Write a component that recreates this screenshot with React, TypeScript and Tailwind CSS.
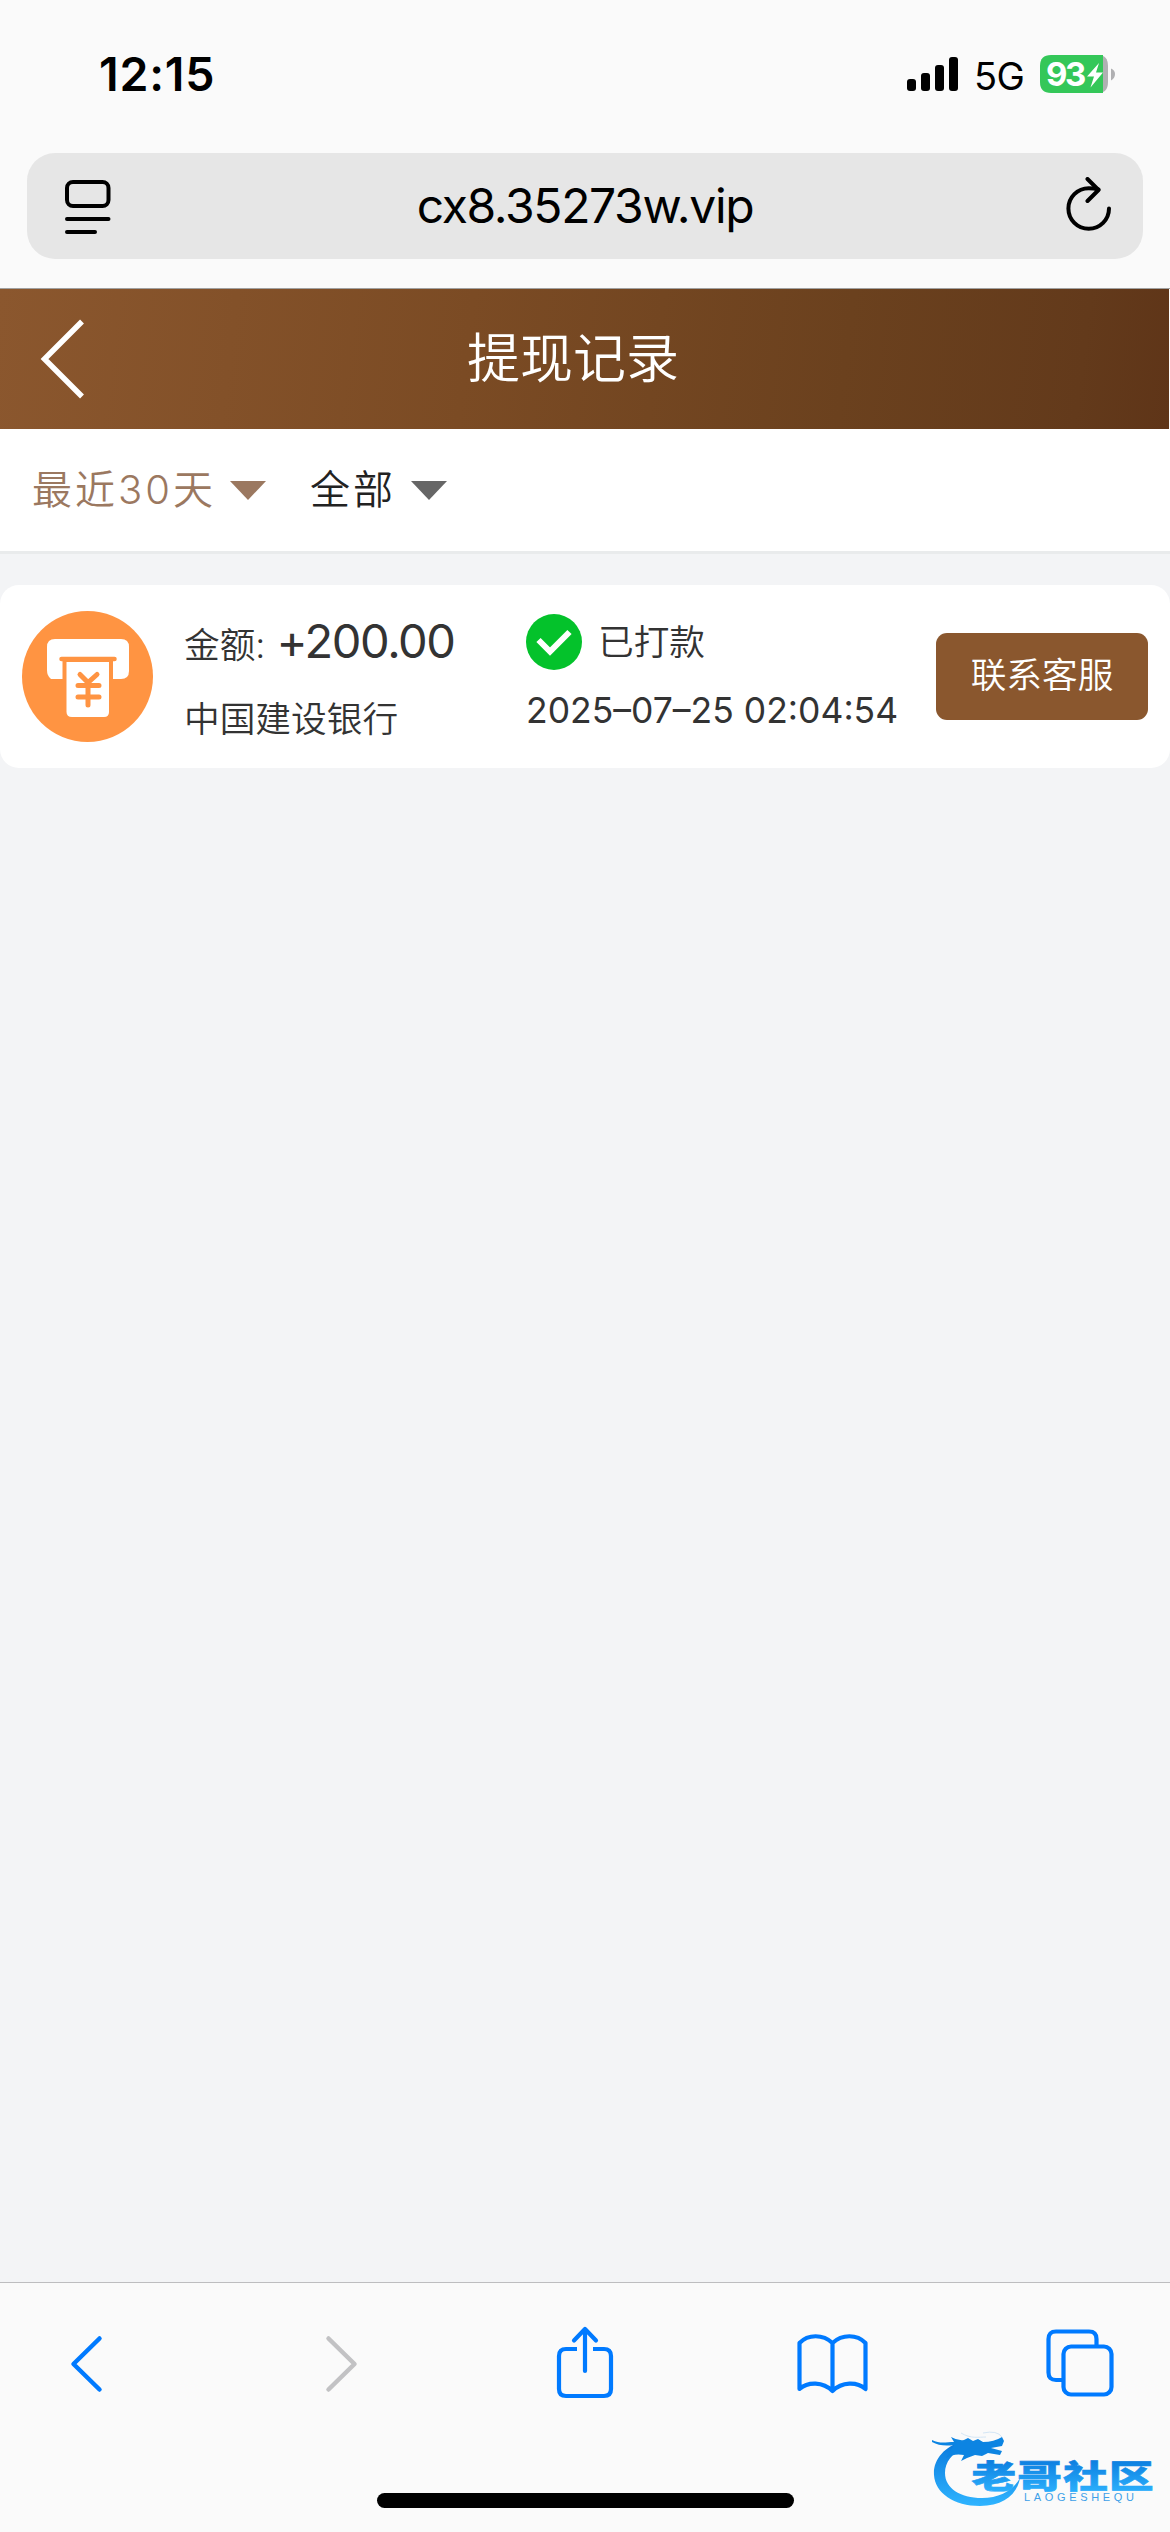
import React from "react";

function StatusBar() {
  return (
    <div className="flex h-[153px] items-start justify-between pl-[99px] pr-[54px]">
      <div className="mt-[46px] text-[46.500px] font-semibold leading-[56px] tracking-[0.8px] text-black">12:15</div>
      <div className="flex items-start">
        <svg className="mt-[57px] h-[34px] w-[52px]" viewBox="0 0 52 34">
          <rect x="0" y="22" width="9" height="12" rx="3" />
          <rect x="14" y="16" width="9" height="18" rx="3" />
          <rect x="28" y="8" width="9" height="26" rx="3" />
          <rect x="42" y="0" width="9" height="34" rx="3" />
        </svg>
        <div className="ml-[15px] mt-[52px] w-[66px] text-[38px] leading-[48px] tracking-[-0.7px] text-black">5G</div>
        <div className="relative mt-[55px] h-[38px] w-[76px]">
          <svg className="h-[38px] w-[76px]" viewBox="0 0 76 38">
            <path d="M11 0H58Q68 0 68 11V27Q68 38 58 38H11Z" fill="#b0b0b2" />
            <path d="M11 0H63V38H11Q0 38 0 27V11Q0 0 11 0Z" fill="#34c759" />
            <path d="M71 13.500Q75 15 75 19T71 25.500Z" fill="#b0b0b2" />
            <path d="M59 8L47 21.500H54L50.500 32.500L63 17.500H56Z" fill="#fff" />
          </svg>
          <span className="absolute left-[6px] top-0 text-[33px] font-bold leading-[38px] tracking-[-2.500px] text-white">93</span>
        </div>
      </div>
    </div>
  );
}

function AddressBar() {
  return (
    <div className="mx-[27px] flex h-[106px] items-center justify-between rounded-[28px] bg-[#e6e6e6] pl-[38px] pr-[30px]">
      <svg className="h-[56px] w-[46px]" viewBox="0 0 46 56" fill="none" stroke="#000" strokeWidth="4" strokeLinecap="round">
        <rect x="2" y="4" width="41.500" height="24" rx="6" />
        <path d="M2 41H43.500M2 54H30" />
      </svg>
      <div className="-ml-[6px] whitespace-nowrap text-[48px] leading-[60px] tracking-[-1.350px] text-black">cx8.35273w.vip</div>
      <svg className="h-[58px] w-[48px]" viewBox="0 0 48 58" fill="none" stroke="#000" strokeWidth="4" strokeLinecap="round" strokeLinejoin="round">
        <path d="M44 31.500A20.300 20.300 0 1 1 23.700 11.200Q29 11.200 33.500 12.500" />
        <path d="M22.500 2L33.500 13L22.500 24" />
      </svg>
    </div>
  );
}

function Record() {
  return (
    <div className="mt-[31px] flex h-[183px] items-start rounded-[19px] bg-white pl-[22px] font-[350] text-[#333]">
      <svg className="mt-[26px] h-[131px] w-[131px] shrink-0" viewBox="0 0 131 131">
        <circle cx="65.500" cy="65.500" r="65.500" fill="#ff9442" />
        <path d="M33 28H99Q107 28 107 36V60Q107 68 99 68H29Q25 65 25 59V36Q25 28 33 28Z" fill="#fff" />
        <rect x="40.500" y="48" width="50.500" height="24" fill="#ff9442" />
        <path d="M39.500 48H92.500" stroke="#ff9442" strokeWidth="4.500" strokeLinecap="round" />
        <path d="M44.500 51H87V101Q87 106 82 106H50Q44.500 106 44.500 101Z" fill="#fff" />
        <path d="M58 63.500L66 71.500L75 63.500M66 71V94M56 74.500H77M56 86H77" fill="none" stroke="#ff9442" strokeWidth="5" strokeLinecap="round" />
      </svg>
      <div className="ml-[31px] mt-[29px] w-[342px] shrink-0 whitespace-nowrap">
        <div className="flex h-[54px] items-baseline leading-[54px]">
          <span className="text-[35.700px]">金额:</span>
          <span className="ml-[11px] text-[47px] font-normal tracking-[-1.400px]">+200.00</span>
        </div>
        <div className="mt-[24px] text-[35.700px] leading-[54px]">中国建设银行</div>
      </div>
      <div className="mt-[29px] w-[410px] shrink-0 whitespace-nowrap">
        <div className="flex h-[56px] items-center">
          <svg className="h-[56px] w-[56px]" viewBox="0 0 56 56">
            <circle cx="28" cy="28" r="28" fill="#04c22b" />
            <path d="M12.500 26L24 37.500L43.500 18" fill="none" stroke="#fff" strokeWidth="6" />
          </svg>
          <span className="ml-[16px] mt-[2px] text-[35.700px]">已打款</span>
        </div>
        <div className="mt-[14px] text-[35.500px] font-normal leading-[54px]">2025–07–25 02:04:54</div>
      </div>
      <button className="mt-[48px] h-[87px] w-[212px] shrink-0 rounded-[11px] bg-[#8a572e] pb-[2px] text-[35.700px] text-white">联系客服</button>
    </div>
  );
}

function Logo() {
  return (
    <svg className="absolute bottom-[22px] right-[10px] h-[84px] w-[230px]" viewBox="0 0 230 84">
      <defs>
        <linearGradient id="wave" x1="0" y1="0" x2="0" y2="1">
          <stop offset="0" stopColor="#0878dc" />
          <stop offset="1" stopColor="#2fb4ff" />
        </linearGradient>
      </defs>
      <path d="M32 15C14 21 3 34 4 49C5 67 24 80 50 80C73 80 87 69 90 52C83 65 69 72 52 72C30 72 15 62 15 47C15 36 22 27 35 21Z" fill="url(#wave)" />
      <path d="M2 14C10 18 16 16 24 16L21 11Q28 15 34 14L38 12L43 15L48 13L53 16Q64 16 72 11L74 15L72 20L61 22L72 25L70 29L58 27L52 30L45 29L37 32L31 35L34 29Q24 27 16 32L24 19Q11 21 2 16Z" fill="#0c84e2" />
      <path d="M31 7C41 13 49 11 56 11M53 7Q67 4 72 11" fill="none" stroke="#d4e6f5" strokeWidth="1" />
      <g transform="translate(41.500 61.500) scale(1.31 0.94)">
        <text x="0" y="0" fontSize="34" fontWeight="900" textLength="139" fill="url(#wave)" stroke="url(#wave)" strokeWidth="0.700">老哥社区</text>
      </g>
      <text x="94" y="74.500" fontSize="11" textLength="110" fill="#3d9fe8" fontFamily="Liberation Sans, sans-serif">LAOGESHEQU</text>
    </svg>
  );
}

function Toolbar() {
  return (
    <div className="relative flex h-[250px] flex-col items-center border-t border-[#bdbdbf] bg-[#fafafa]">
      <div className="flex h-[160px] w-full items-center pl-[70px]">
        <svg className="h-[72px] w-[34px]" viewBox="0 0 34 72" fill="none" stroke="#007aff" strokeWidth="4.500" strokeLinecap="round" strokeLinejoin="round">
          <path d="M29.500 11.500L3.500 37L29.500 62.500" />
        </svg>
        <svg className="ml-[221px] h-[72px] w-[34px]" viewBox="0 0 34 72" fill="none" stroke="#c2c2c4" strokeWidth="4.500" strokeLinecap="round" strokeLinejoin="round">
          <path d="M3.500 11.500L29.500 37L3.500 62.500" />
        </svg>
        <svg className="ml-[197px] h-[76px] w-[58px]" viewBox="0 0 58 76" fill="none" stroke="#007aff" strokeWidth="4.200" strokeLinecap="round" strokeLinejoin="round">
          <path d="M29 46V5M18 15.500L29 4L40 15.500" />
          <path d="M21 24H10Q3 24 3 31V64Q3 71 10 71H48Q55 71 55 64V31Q55 24 48 24H37" strokeLinecap="butt" />
        </svg>
        <svg className="ml-[182px] h-[64px] w-[72px]" viewBox="0 0 72 64" fill="none" stroke="#007aff" strokeWidth="4.200" strokeLinecap="round" strokeLinejoin="round">
          <path d="M36.500 12C27 3 12 3 3.500 12V58C12 50.500 27 50.500 36.500 60C46 50.500 61 50.500 69.500 58V12C61 3 46 3 36.500 12V60" />
        </svg>
        <svg className="ml-[178px] h-[68px] w-[68px]" viewBox="0 0 68 68" fill="none" stroke="#007aff" strokeWidth="4.200">
          <path d="M16 51H10Q2.500 51 2.500 43.500V10Q2.500 2.500 10 2.500H43Q50.500 2.500 50.500 10V16" />
          <rect x="17.500" y="17.500" width="48" height="48" rx="7.500" />
        </svg>
      </div>
      <div className="mt-[50px] h-[15px] w-[417px] rounded-full bg-black" />
      <Logo />
    </div>
  );
}

export default function App() {
  return (
    <div className="flex h-[2532px] w-[1170px] flex-col overflow-hidden bg-[#f3f4f6] font-['Inter','Noto_Sans_CJK_SC',sans-serif]">
      <div className="h-[289px] border-b border-[#a0a0a0] bg-[#fafafa]">
        <StatusBar />
        <AddressBar />
      </div>
      <div className="flex h-[140px] items-center border-r border-white bg-[linear-gradient(97deg,#8b572e_0%,#7b4b24_40%,#6b411e_72%,#633a1b_92%,#5f3518_100%)] pl-[40px]">
        <svg className="h-[80px] w-[46px]" viewBox="0 0 46 80" fill="none" stroke="#fff" strokeWidth="5.500">
          <path d="M42 2.500L4.500 40L42 77.500" />
        </svg>
        <h1 className="ml-[381px] text-[53px] font-[350] leading-[80px] text-white">提现记录</h1>
      </div>
      <div className="flex h-[125px] items-center border-b-3 border-[#e9ebec] bg-white pl-[32px] font-[350] text-[40px] leading-[60px] tracking-[3px]">
        <span className="w-[198px] text-[#9b7860]">最近30天</span>
        <svg className="h-[19px] w-[36px]" viewBox="0 0 36 19"><path d="M0 0H36L18 19Z" fill="#9b7860" /></svg>
        <span className="ml-[44px] w-[101px] text-[#222]">全部</span>
        <svg className="h-[19px] w-[36px]" viewBox="0 0 36 19"><path d="M0 0H36L18 19Z" fill="#666" /></svg>
      </div>
      <main className="flex-1">
        <Record />
      </main>
      <Toolbar />
    </div>
  );
}
